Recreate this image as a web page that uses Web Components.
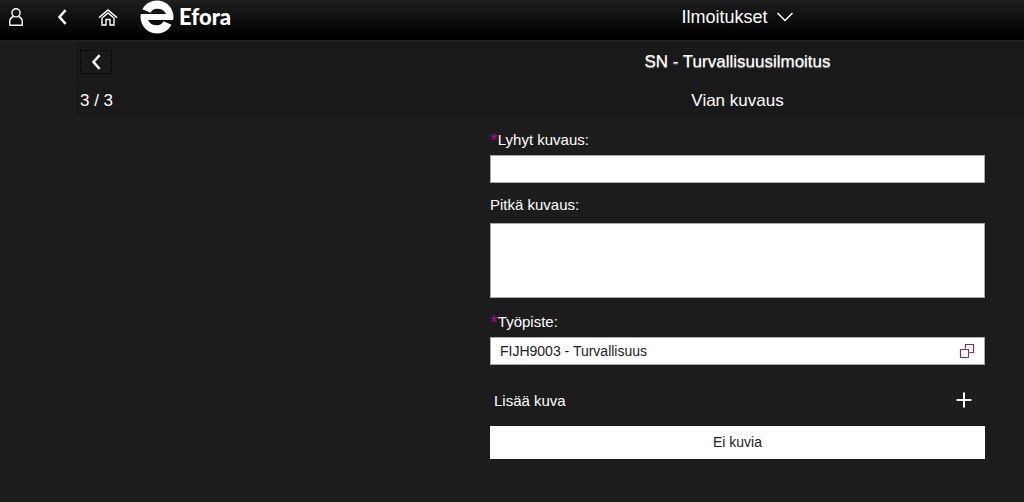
<!DOCTYPE html>
<html lang="fi">
<head>
<meta charset="utf-8">
<title>Efora – Ilmoitukset</title>
<style>
html, body { margin: 0; min-height: 100%; background: #1c1c1c; }
body { color: #fff; font-family: "Liberation Sans", Arial, sans-serif; font-size: 15px; }
</style>
</head>
<body>
<efora-app></efora-app>
<script>
const define = (name, html, setup) => customElements.define(name, class extends HTMLElement {
  constructor() {
    super();
    const t = document.createElement('template');
    t.innerHTML = html;
    this.attachShadow({ mode: 'open' }).append(t.content.cloneNode(true));
  }
  connectedCallback() { if (setup) setup(this, this.shadowRoot); }
});

const icons = {
  user: [16, 20, '<circle cx="8" cy="5.8" r="4.1"/><path d="M1.7 18.3V14.5Q1.7 11.2 5.5 9.5M10.5 9.5Q14.3 11.2 14.3 14.5V18.3H1.7"/>', 1.4],
  back: [12, 18, '<path d="M9.6 2.2L3.5 9L9.6 15.8"/>', 2.5],
  home: [20, 20, '<path d="M1 10.6L10 3L19 10.6M4 11.5V18H8V12.5H12V18H16V11.5M3.5 11.5L10 6L16.5 11.5"/>', 1.4],
  down: [18, 12, '<path d="M1.5 2L9 9.5L16.5 2"/>', 1.5],
  plus: [16, 16, '<path d="M8 .5V15.5M.5 8H15.5"/>', 2],
  help: [16, 16, '<path d="M6.5 5.5V1.5H14.5V9.5H10.5M1.5 6.5H9.5V14.5H1.5Z"/>', 1.2]
};

define('ef-icon', `<style>:host{display:block;line-height:0}svg{display:block}</style>`, (el, root) => {
  const [w, h, body, sw] = icons[el.getAttribute('name')];
  root.innerHTML += `<svg width="${w}" height="${h}" viewBox="0 0 ${w} ${h}" fill="none" stroke="currentColor" stroke-width="${sw}" aria-hidden="true">${body}</svg>`;
});

define('icon-button', `<style>
:host{display:block}
button{display:grid;place-items:center;box-sizing:border-box;width:32px;height:var(--button-height,32px);padding:0;margin:0;background:none;border:var(--button-border,0);color:inherit;cursor:pointer}
</style><button type="button"><slot></slot></button>`, (el, root) => {
  root.querySelector('button').setAttribute('aria-label', el.getAttribute('label'));
});

define('efora-logo', `<style>
:host{display:block}
a{display:flex;align-items:center;gap:5px;color:#fff;text-decoration:none;font:900 22px/32px Lato,"Open Sans",sans-serif}
svg{display:block}
</style><a href="#"><svg width="34" height="34" viewBox="0 0 34 34" aria-hidden="true">
<mask id="m"><rect width="34" height="34" fill="#fff"/>
<path d="M-1 14H26C24.500 10.600 21.500 8.700 17 8.700C14 8.700 12 10 10.500 12.700L3 9.500L-1 8Z"/>
<path d="M35 20H8C9.500 23.400 12.500 25.300 17 25.300C20 25.300 22 24 23.500 21.300L31 24.500L35 26Z"/></mask>
<circle cx="17" cy="17" r="16.500" fill="#fff" mask="url(#m)"/>
</svg><span>Efora</span></a>`);

define('shell-header', `<style>
:host{display:grid;grid-template-columns:490fr 495fr 39fr;height:40px;background:linear-gradient(#1e1e1e,#000 90%);border-bottom:1px solid #222}
nav{display:flex;align-items:center;height:33px}
nav icon-button+icon-button{margin-left:14px}
efora-logo{margin-left:16px}
button{display:flex;align-items:center;justify-content:center;gap:8px;height:33px;padding:0;background:none;border:0;color:inherit;font:18px/32px "Liberation Sans",Arial,sans-serif;cursor:pointer}
</style><nav aria-label="Päävalikko">
<icon-button label="Käyttäjä"><ef-icon name="user"></ef-icon></icon-button>
<icon-button label="Takaisin"><ef-icon name="back"></ef-icon></icon-button>
<icon-button label="Etusivu"><ef-icon name="home"></ef-icon></icon-button>
<efora-logo></efora-logo></nav>
<button type="button">Ilmoitukset<ef-icon name="down"></ef-icon></button>`);

define('title-bar', `<style>
:host{display:grid;grid-template-columns:414fr 495fr 39fr;align-items:center;box-sizing:border-box;height:var(--bar-height);background:#191919;border-bottom:1px solid #1f1f1f}
.start{padding-left:4px;font-size:17px}
h2{margin:0;text-align:center;font-size:17px;font-weight:400;line-height:24px;text-shadow:var(--title-shadow,none)}
</style><div class="start"><slot name="start"></slot></div><h2><slot></slot></h2>`);

define('form-field', `<style>
:host{display:block}
label{display:flex;font-size:15px;line-height:20px;margin-bottom:var(--label-gap,5px)}
.req{color:#a3107c;font-size:20px;line-height:20px}
input,textarea{display:block;box-sizing:border-box;width:100%;margin:0;border:1px solid #aaa;border-radius:0;background:#fff;color:#222;font:14px/20px "Liberation Sans",Arial,sans-serif;padding:3px 9px;outline:0;resize:none}
input{height:28px}
textarea{height:75px}
.box{display:grid;grid-template-columns:minmax(0,1fr)}
.box>*{grid-area:1/1}
icon-button{justify-self:end;align-self:center;margin-right:2px;color:#80306c;--button-height:26px}
</style><label for="c"></label><div class="box"></div>`, (el, root) => {
  const req = el.hasAttribute('required');
  root.querySelector('label').innerHTML = (req ? '<span class="req">*</span>' : '') + el.getAttribute('label');
  const c = document.createElement(el.hasAttribute('multiline') ? 'textarea' : 'input');
  c.id = 'c';
  c.required = req;
  c.value = el.getAttribute('value') || '';
  const box = root.querySelector('.box');
  box.append(c);
  if (el.hasAttribute('help')) box.insertAdjacentHTML('beforeend', '<icon-button label="Valitse työpiste"><ef-icon name="help"></ef-icon></icon-button>');
});

define('picture-list', `<style>
:host{display:block}
header{display:flex;align-items:center;justify-content:space-between;padding:0 5px 0 4px;height:32px}
h3{margin:0;font-size:15px;font-weight:400}
p{margin:10px 0 0;background:#fff;color:#222;text-align:center;font-size:14px;line-height:33px}
</style><header><h3>Lisää kuva</h3><icon-button label="Lisää kuva"><ef-icon name="plus"></ef-icon></icon-button></header><p>Ei kuvia</p>`);

define('fault-form', `<style>
:host{display:grid;grid-template-columns:414fr 495fr 39fr}
form{grid-column:2;padding:12px 0 43px}
.short{margin-bottom:12px}
.long{margin-bottom:14px;--label-gap:8px}
.place{margin-bottom:19px}
</style><form>
<form-field class="short" label="Lyhyt kuvaus:" required></form-field>
<form-field class="long" label="Pitkä kuvaus:" multiline></form-field>
<form-field class="place" label="Työpiste:" value="FIJH9003 - Turvallisuus" required help></form-field>
<picture-list></picture-list></form>`);

define('efora-app', `<style>
:host{display:block}
main{margin-left:76px}
.top{--bar-height:43px;--title-shadow:0 1px 1px #aaa}
.step{--bar-height:34px}
.top icon-button{--button-border:1px dotted #000;--button-height:24px}
</style><shell-header></shell-header><main>
<title-bar class="top"><icon-button slot="start" label="Edellinen"><ef-icon name="back"></ef-icon></icon-button>SN - Turvallisuusilmoitus</title-bar>
<title-bar class="step"><span slot="start">3 / 3</span>Vian kuvaus</title-bar>
<fault-form></fault-form></main>`);
</script>
</body>
</html>
